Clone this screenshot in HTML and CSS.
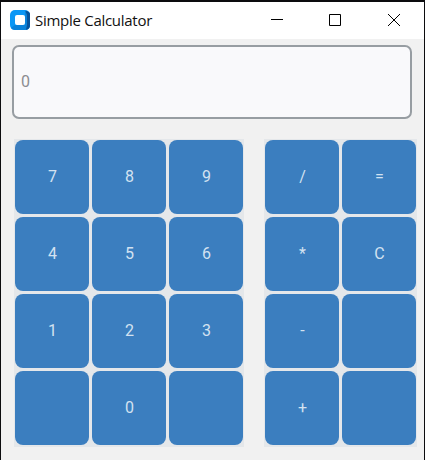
FILE: index.html
```html
<!DOCTYPE html>
<html lang="en">
<head>
<meta charset="utf-8">
<title>Simple Calculator</title>
<link rel="stylesheet" href="styles.css">
</head>
<body>
<div class="window">
  <header class="titlebar">
    <svg class="logo" width="20" height="20" viewBox="0 0 20 20">
      <rect width="20" height="20" rx="5" fill="#0b97f5"/>
      <path d="M15 0.5L20 3V15Q20 20 15 20H5Q2 20 1 18L5 15H15Z" fill="#0a82da"/>
      <path d="M15.5 1Q20 1 20 5V15Q20 19 16 19.8L17 15V5Z" fill="#07529a"/>
      <rect x="5" y="5" width="10" height="10" rx="2" fill="#fff"/>
    </svg>
    <span class="title">Simple Calculator</span>
    <div class="controls">
      <svg width="58" height="37" viewBox="0 0 58 37"><path d="M21 17.5H33"/></svg>
      <svg width="58" height="37" viewBox="0 0 58 37"><path d="M21.5 12.5H32.5V23.5H21.5Z"/></svg>
      <svg width="58" height="37" viewBox="0 0 58 37"><path d="M22 12L34 24M34 12L22 24"/></svg>
    </div>
  </header>
  <div class="display">0</div>
  <main class="pads">
    <div class="pad digits">
      <button>7</button><button>8</button><button>9</button>
      <button>4</button><button>5</button><button>6</button>
      <button>1</button><button>2</button><button>3</button>
      <button></button><button>0</button><button></button>
    </div>
    <div class="pad operators">
      <button>/</button><button>=</button>
      <button>*</button><button>C</button>
      <button>-</button><button></button>
      <button>+</button><button></button>
    </div>
  </main>
</div>
</body>
</html>
```
FILE: styles.css
```css
* { box-sizing: border-box; }
body { margin: 0; }
.window {
  width: 425px;
  height: 460px;
  overflow: hidden;
  background: #f1f1f1;
  border: solid #0c0c0e;
  border-width: 2px 1px 0;
}
.titlebar {
  display: flex;
  align-items: center;
  height: 37px;
  padding-left: 9px;
  background: #fff;
}
.logo { margin: -1px 5px 0 0; }
.title {
  margin-top: -1px;
  font: 15px/20px "Open Sans", sans-serif;
  letter-spacing: -0.28px;
  color: #111;
  white-space: nowrap;
}
.controls { display: flex; margin-left: auto; }
.controls svg { fill: none; stroke: #000; stroke-width: 1; }
.display {
  width: 400px;
  height: 74px;
  margin: 6px 0 0 11px;
  padding-left: 7px;
  border: 2px solid #979da2;
  border-radius: 7px;
  background: #f9f9fb;
  color: #8c8d91;
  font: 16px/70px Roboto, sans-serif;
}
.pads { display: flex; gap: 20px; margin: 20px 0 0 13px; }
.pad {
  display: grid;
  grid-auto-rows: 74px;
  gap: 3px;
  padding: 1px 1px 2px;
  background: #e4e7ea;
}
.digits { grid-template-columns: repeat(3, 74px); }
.operators { grid-template-columns: repeat(2, 74px); }
.pad button {
  margin: 0;
  padding: 0 0 0 1px;
  border: 0;
  border-radius: 8px;
  background: #3b7ebf;
  color: #d3e2f1;
  font: 16px/74px Roboto, sans-serif;
}
```
